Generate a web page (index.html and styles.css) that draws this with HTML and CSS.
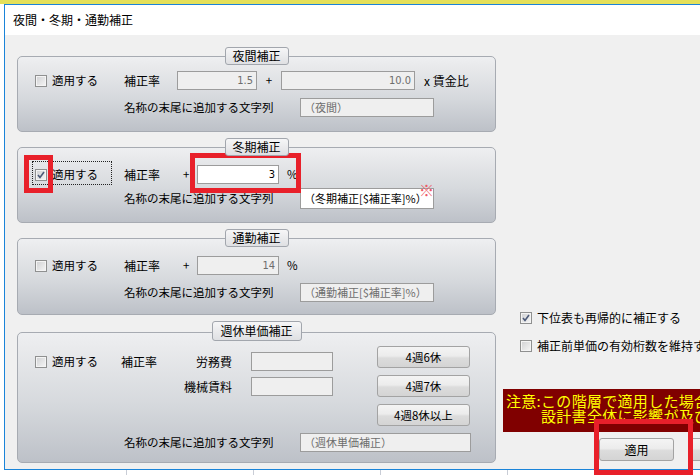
FILE: index.html
```html
<!DOCTYPE html>
<html lang="ja">
<head>
    <meta charset="UTF-8">
    <meta name="viewport" content="width=device-width, initial-scale=1.0">
    <title>夜間・冬期・通勤補正</title>
    <link rel="stylesheet" href="styles.css">
</head>
<body>
    <div class="window">
        <div class="titlebar">夜間・冬期・通勤補正</div>

        <div class="content">
            <div class="left">
                <!-- 夜間補正 -->
                <section class="group">
                    <div class="tab">夜間補正</div>
                    <div class="box box-night">
                        <div class="row">
                            <span class="check"><span class="cb"></span>適用する</span>
                            <span class="lbl lbl-night">補正率</span>
                            <span class="field off w80">1.5</span>
                            <span class="plus-mid">+</span>
                            <span class="field off w134">10.0</span>
                            <span class="unit-wage">x 賃金比</span>
                        </div>
                        <div class="row row2">
                            <span class="lbl-long">名称の末尾に追加する文字列</span>
                            <span class="field off text w134">（夜間）</span>
                        </div>
                    </div>
                </section>

                <!-- 冬期補正 -->
                <section class="group">
                    <div class="tab">冬期補正</div>
                    <div class="box box-winter">
                        <div class="row">
                            <span class="check focus"><span class="cb checked"></span>適用する</span>
                            <span class="lbl">補正率</span>
                            <span class="plus">+</span>
                            <span class="field on w82">3</span>
                            <span class="unit">%</span>
                        </div>
                        <div class="row row2 tight">
                            <span class="lbl-long">名称の末尾に追加する文字列</span>
                            <span class="field on text w134 tall">（冬期補正[$補正率]%）</span>
                        </div>
                    </div>
                </section>

                <!-- 通勤補正 -->
                <section class="group">
                    <div class="tab">通勤補正</div>
                    <div class="box box-commute">
                        <div class="row">
                            <span class="check"><span class="cb"></span>適用する</span>
                            <span class="lbl">補正率</span>
                            <span class="plus">+</span>
                            <span class="field off w82">14</span>
                            <span class="unit">%</span>
                        </div>
                        <div class="row row2">
                            <span class="lbl-long">名称の末尾に追加する文字列</span>
                            <span class="field off text w134">（通勤補正[$補正率]%）</span>
                        </div>
                    </div>
                </section>

                <!-- 週休単価補正 -->
                <section class="group">
                    <div class="tab tab-wide">週休単価補正</div>
                    <div class="box box-weekly">
                        <div class="weekly-top">
                            <div class="weekly-grid">
                                <span class="check"><span class="cb"></span>適用する</span>
                                <span class="lbl">補正率</span>
                                <span class="lbl-right">労務費</span>
                                <span class="field off w82"></span>
                                <span></span>
                                <span></span>
                                <span class="lbl-right">機械賃料</span>
                                <span class="field off w82"></span>
                            </div>
                            <div class="btn-col">
                                <button class="btn w93">4週6休</button>
                                <button class="btn w93">4週7休</button>
                                <button class="btn w93">4週8休以上</button>
                            </div>
                        </div>
                        <div class="row row2 weekly-name">
                            <span class="lbl-long">名称の末尾に追加する文字列</span>
                            <span class="field off text w171">（週休単価補正）</span>
                        </div>
                    </div>
                </section>
            </div>

            <div class="right">
                <div class="opt opt-first"><span class="cb checked"></span>下位表も再帰的に補正する</div>
                <div class="opt"><span class="cb"></span>補正前単価の有効桁数を維持する</div>

                <div class="warning">
                    <div>注意:この階層で適用した場合は、</div>
                    <div class="warning-2">設計書全体に影響が及びます。</div>
                </div>

                <div class="actions">
                    <button class="btn btn-main">適用</button>
                    <button class="btn btn-main">閉じる</button>
                </div>
            </div>
        </div>

        <!-- annotations drawn over the dialog -->
        <div class="mark mark-check"></div>
        <div class="mark mark-rate"></div>
        <div class="mark mark-apply"></div>
        <span class="kome">※</span>
    </div>
</body>
</html>
```

FILE: styles.css
```css
html, body {
    margin: 0;
    padding: 0;
    overflow: hidden;
}

body {
    width: 700px;
    height: 475px;
    font-family: "Noto Sans CJK JP", "Noto Sans", sans-serif;
    font-size: 11.5px;
    line-height: 1;
    color: #000;
    background:
        linear-gradient(#e4e05a 0, #e4e05a 4px, transparent 4px),
        repeating-linear-gradient(90deg, transparent 0, transparent 126px, #c9cdd6 126px, #c9cdd6 127px),
        #fff;
}

.window {
    position: relative;
    box-sizing: border-box;
    width: 760px;
    height: 466px;
    margin: 4px 0 0 4px;
    border: 1px solid #1a84d9;
    background-color: #f0f0f0;
}

.titlebar {
    height: 30px;
    padding-left: 8px;
    display: flex;
    align-items: center;
    background-color: #fff;
    font-size: 12px;
}

.content {
    display: flex;
    padding: 12px 0 0 12px;
}

.left {
    width: 486px;
    display: flex;
    flex-direction: column;
    gap: 6px;
}

/* group boxes */
.group {
    display: flex;
    flex-direction: column;
}

.tab {
    position: relative;
    z-index: 1;
    align-self: center;
    box-sizing: border-box;
    width: 64px;
    height: 18px;
    margin-bottom: -9px;
    display: flex;
    align-items: center;
    justify-content: center;
    border: 1px solid #a2a6ad;
    border-radius: 3px;
    background: linear-gradient(#f6f6f7, #dfe0e3);
    font-size: 12px;
}

.tab-wide {
    width: 90px;
    height: 20px;
}

.box {
    box-sizing: border-box;
    height: 76px;
    padding: 17px 0 0 17px;
    border: 1px solid #a7abb2;
    border-radius: 5px;
    background: linear-gradient(#eeeff1 0, #e9eaec 12%, #d6d9dd 55%, #bdc1c8 100%);
}

.box-night {
    padding-top: 14px;
}

.box-commute {
    height: 77px;
}

.box-weekly {
    height: 131px;
    padding-top: 13px;
}

.row {
    display: flex;
    align-items: center;
    height: 19px;
}

.row2 {
    margin-top: 8px;
    padding-left: 89px;
}

.row2.tight {
    margin-top: 5px;
}

.check {
    width: 89px;
    display: flex;
    align-items: center;
    box-sizing: border-box;
}

.check.focus {
    position: relative;
}

.check.focus::after {
    content: "";
    position: absolute;
    left: -2px;
    top: -7px;
    width: 78px;
    height: 22px;
    outline: 1px dotted #222;
}

.cb {
    box-sizing: border-box;
    width: 12px;
    height: 12px;
    margin-right: 5px;
    flex: none;
    border: 1px solid #8f9090;
    background: linear-gradient(135deg, #cfd0d2, #f6f6f6);
    box-shadow: inset 0 0 0 1px #f4f4f4;
}

.cb.checked {
    background:
        url("data:image/svg+xml,%3Csvg xmlns='http://www.w3.org/2000/svg' width='10' height='10'%3E%3Cpath d='M2 5 L4 7.5 L8 2' fill='none' stroke='%234c5a78' stroke-width='1.6'/%3E%3C/svg%3E") center / 10px 10px no-repeat,
        linear-gradient(135deg, #cfd0d2, #f6f6f6);
}

.lbl {
    width: 59px;
    font-size: 12px;
}

.lbl-night {
    width: 53px;
}

.plus {
    width: 14px;
}

.plus-mid {
    width: 24px;
    text-align: center;
}

.unit {
    margin-left: 8px;
}

.unit-wage {
    margin-left: 9px;
    font-size: 12px;
}

.lbl-long {
    width: 176px;
}

.field {
    box-sizing: border-box;
    height: 19px;
    padding: 0 3px;
    display: flex;
    align-items: center;
    justify-content: flex-end;
    border: 1px solid #9c9c9c;
    font-family: "DejaVu Sans Condensed", "Noto Sans CJK JP", sans-serif;
    font-size: 11px;
}

.field.text {
    justify-content: flex-start;
    font-family: "Noto Sans CJK JP", sans-serif;
    font-size: 11px;
}

.field.off {
    background-color: #efefef;
    color: #6d6d6d;
}

.field.on {
    background-color: #fff;
    color: #000;
}

.field.tall {
    height: 21px;
}

.w80 { width: 80px; }
.w82 { width: 82px; }
.w134 { width: 134px; }
.w171 { width: 171px; }
.w93 { width: 93px; }

/* weekly box */
.weekly-top {
    display: flex;
    align-items: flex-start;
}

.weekly-grid {
    margin-top: 6px;
    display: grid;
    grid-template-columns: 86px 56px 55px 101px;
    row-gap: 6px;
    grid-auto-rows: 19px;
    align-items: center;
}

.weekly-grid .check {
    width: 86px;
}

.weekly-grid .lbl {
    width: auto;
}

.weekly-grid .field {
    margin-left: 19px;
}

.lbl-right {
    text-align: right;
    font-size: 12px;
}

.btn-col {
    margin-left: 44px;
    display: flex;
    flex-direction: column;
    gap: 7px;
}

.btn {
    box-sizing: border-box;
    height: 22px;
    padding: 0;
    border: 1px solid #a3a3a3;
    border-radius: 3px;
    background: linear-gradient(#f4f4f4 0, #ececec 45%, #dcdcdc 55%, #d4d4d4 100%);
    font-family: "Noto Sans CJK JP", sans-serif;
    font-size: 11.5px;
    color: #000;
}

.weekly-name {
    margin-top: 7px;
}

/* right side */
.right {
    margin-left: 7px;
    flex: 1;
    display: flex;
    flex-direction: column;
}

.opt {
    height: 16px;
    padding-left: 17px;
    display: flex;
    align-items: center;
    white-space: nowrap;
    margin-top: 12px;
    font-size: 12px;
}

.opt-first {
    margin-top: 263px;
}

.warning {
    box-sizing: border-box;
    height: 43px;
    margin-top: 35px;
    padding: 4px 0 0 3px;
    background-color: #800000;
    color: #ffff00;
    font-size: 15px;
    letter-spacing: 0.3px;
    line-height: 15px;
    white-space: nowrap;
    overflow: hidden;
}

.warning-2 {
    padding-left: 35px;
}

.actions {
    margin-top: 6px;
    padding-left: 96px;
    display: flex;
    gap: 14px;
}

.btn-main {
    width: 75px;
    height: 23px;
    font-size: 12px;
}

/* red annotations */
.mark {
    position: absolute;
    box-sizing: border-box;
    border: 5px solid #e8202a;
}

.mark-check {
    left: 19px;
    top: 150px;
    width: 29px;
    height: 38px;
}

.mark-rate {
    left: 185px;
    top: 148px;
    width: 111px;
    height: 40px;
}

.mark-apply {
    left: 589px;
    top: 414px;
    width: 99px;
    height: 56px;
}

.kome {
    position: absolute;
    left: 414px;
    top: 177px;
    color: #ee5a66;
    font-size: 15px;
}
```
